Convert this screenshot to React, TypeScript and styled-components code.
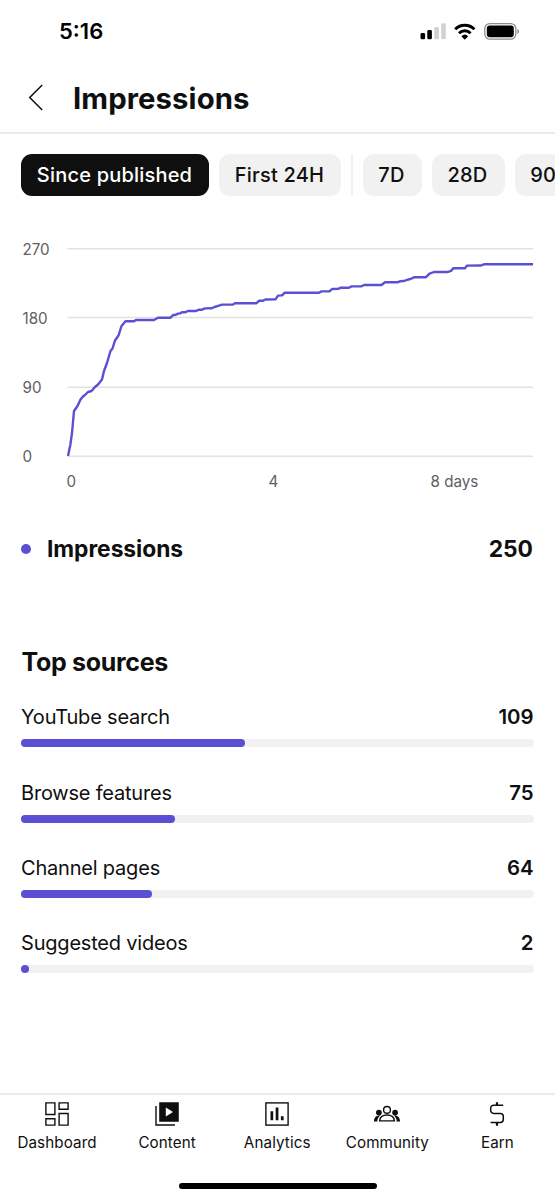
import React from 'react';
import styled, { createGlobalStyle } from 'styled-components';

const ink = '#0f0f0f';
const accent = '#5b50d3';

const GlobalStyle = createGlobalStyle`
  *, *::before, *::after { box-sizing: border-box; }
  body { margin: 0; background: #fff; }
`;

const Screen = styled.div`
  width: 555px;
  height: 1200px;
  display: flex;
  flex-direction: column;
  overflow: hidden;
  background: #fff;
  color: ${ink};
  font-family: Inter, "Liberation Sans", sans-serif;
`;

const StatusBar = styled.div`
  height: 64px;
  flex: none;
  display: flex;
  justify-content: space-between;
  align-items: center;
  padding: 0 35px 0 59px;
`;

const Clock = styled.div`
  font-size: 22px;
  font-weight: 600;
  padding-bottom: 2px;
  color: #000;
`;

const Header = styled.header`
  height: 70px;
  flex: none;
  display: flex;
  align-items: center;
  gap: 29px;
  padding: 0 0 0 28px;
  border-bottom: 2px solid #ebebeb;
`;

const Title = styled.h1`
  margin: 0;
  padding-top: 2px;
  font-size: 29.3px;
  font-weight: 700;
  letter-spacing: 0.1px;
  line-height: 36px;
`;

const Chips = styled.div`
  display: flex;
  flex: none;
  gap: 10px;
  height: 42px;
  margin-top: 20px;
  padding-left: 21px;
  overflow: hidden;
`;

const Chip = styled.button<{ $width: number; $active?: boolean }>`
  flex: none;
  width: ${p => p.$width}px;
  height: 42px;
  padding: 0 1px 1px 0;
  border: 0;
  border-radius: 11px;
  background: ${p => (p.$active ? ink : '#f1f1f1')};
  color: ${p => (p.$active ? '#fff' : ink)};
  font-family: inherit;
  font-size: 20px;
  font-weight: 500;
  letter-spacing: 0.2px;
  white-space: nowrap;
`;

const ChipDivider = styled.div`
  flex: none;
  width: 1.5px;
  background: #f1f1f1;
`;

const Chart = styled.svg`
  display: block;
  flex: none;
  margin-top: 34px;
  font-size: 15.2px;
  fill: #606060;
`;

const Legend = styled.div`
  height: 36px;
  flex: none;
  display: flex;
  align-items: center;
  margin: 31px 22px 0 21px;
`;

const Dot = styled.span`
  width: 10px;
  height: 10px;
  margin-right: 16px;
  border-radius: 50%;
  background: ${accent};
`;

const LegendLabel = styled.span`
  flex: 1;
  padding-bottom: 1px;
  font-size: 22.8px;
  font-weight: 700;
  letter-spacing: -0.05px;
`;

const LegendValue = styled.span`
  padding-bottom: 1px;
  font-size: 22.8px;
  font-weight: 700;
`;

const SectionTitle = styled.h2`
  margin: 79px 0 23.4px 21.5px;
  font-size: 25px;
  line-height: 32px;
  font-weight: 700;
  letter-spacing: -0.3px;
`;

const Sources = styled.div`
  display: flex;
  flex: none;
  flex-direction: column;
  padding: 0 21px;
`;

const Source = styled.div`
  height: 75.2px;
`;

const SourceText = styled.div`
  display: flex;
  justify-content: space-between;
  font-size: 20px;
  line-height: 32px;
  margin-bottom: 6px;
`;

const SourceName = styled.span`
  letter-spacing: -0.2px;
`;

const SourceValue = styled.span`
  padding-right: 0.5px;
  font-size: 20.4px;
  font-weight: 600;
`;

const Track = styled.div`
  height: 8px;
  border-radius: 4px;
  background: #f1f1f1;
`;

const Fill = styled.div`
  height: 8px;
  min-width: 8px;
  border-radius: 4px;
  background: ${accent};
`;

const TabBar = styled.nav`
  height: 107px;
  flex: none;
  display: flex;
  margin-top: auto;
  padding: 6px 2.5px 0 2px;
  border-top: 2px solid #ebebeb;
  position: relative;
`;

const Tab = styled.div`
  flex: 1;
  display: flex;
  flex-direction: column;
  align-items: center;
  gap: 5px;
  font-size: 15.2px;
  line-height: 22px;
  letter-spacing: 0.1px;
`;

const HomeIndicator = styled.div`
  position: absolute;
  left: 179px;
  bottom: 11px;
  width: 198px;
  height: 6.5px;
  border-radius: 4px;
  background: #000;
`;

const gridLines = [
  { y: 248.7, label: '270' },
  { y: 317.6, label: '180' },
  { y: 387.3, label: '90' },
  { y: 456.2, label: '0' },
];

const series =
  '68,456 70.3,445 72,433 74,411 77.5,406 80.5,399.5 83,396.5 85,395 88,392 91.5,391 95,387 98,384.5 102,379.5 104,371 107,363 110.5,351 112.5,348.5 115,340.5 118.5,335.5 121.5,326 125.5,321.3 134,321.3 136,320 154,320 158,317.7 170.5,317.7 173,315.2 175.5,314.8 178,313.6 180,313.4 182,312.3 185.5,312.2 188,311 196,311 198.5,309.8 202,309.7 205,308.4 211.5,308.3 214.5,307 219,305.6 222,304.6 233,304.5 235,303.3 256.5,303.2 259,300.8 263,300.7 265.5,299.5 275.5,299.4 278,295.6 282,295.4 284.5,292.8 319,292.8 321.5,291.4 329.5,291.4 332,289 338,288.9 340.5,287.8 349,287.7 351.5,286.4 361.5,286.3 364,285 381.5,285 385,282.3 398,282.2 400.5,281.2 404,281 407,279.8 410.5,279 414,277.3 426,277.2 429.5,273.7 434,272 448,272 451,270.8 453.5,268.2 465,268.2 467,265.6 481,265.5 484,264.3 533,264.3';

const sources = [
  { name: 'YouTube search', value: 109 },
  { name: 'Browse features', value: 75 },
  { name: 'Channel pages', value: 64 },
  { name: 'Suggested videos', value: 2 },
];
const total = 250;

const StatusIcons = () => (
  <svg width="100" height="20" viewBox="0 0 100 20">
    <rect x="0.5" y="11" width="4.6" height="6.3" rx="1.4" />
    <rect x="7.3" y="8" width="4.6" height="9.3" rx="1.4" />
    <rect x="14.3" y="5" width="4.6" height="12.3" rx="1.4" fill="#d2d2d2" />
    <rect x="21.2" y="1.3" width="4.6" height="16" rx="1.4" fill="#d2d2d2" />
    <g fill="none" stroke="#000" strokeWidth="3">
      <path d="M35.2 7.2a13.6 13.6 0 0 1 19.2 0" />
      <path d="M39 11.2a8.3 8.3 0 0 1 11.6 0" />
    </g>
    <path d="M41.4 14.2a5 5 0 0 1 6.8 0l-3.4 3.6z" />
    <rect x="64.8" y="1.6" width="31" height="15.6" rx="5" fill="none" stroke="#8c8c8c" strokeWidth="1.3" />
    <rect x="66.8" y="3.5" width="27" height="11.8" rx="3" />
    <path d="M97.4 7v5c2.2-.8 2.2-4.2 0-5z" fill="#8c8c8c" />
  </svg>
);

const DashboardIcon = () => (
  <svg width="26" height="26" viewBox="0 0 26 26" fill="none" stroke={ink} strokeWidth="1.4">
    <path d="M1.9 1.9h9v11.6h-9zM15.1 1.9h9v6.3h-9zM1.9 17.8h9v6.3h-9zM15.1 12.5h9v11.6h-9z" />
  </svg>
);

const ContentIcon = () => (
  <svg width="26" height="26" viewBox="0 0 26 26">
    <path d="M5.2 1.2h19.6v19.6H5.2zM11.8 6.5v9l7.2-4.5z" fill={ink} fillRule="evenodd" />
    <path d="M2 5v19h19" fill="none" stroke={ink} strokeWidth="1.4" />
  </svg>
);

const AnalyticsIcon = () => (
  <svg width="26" height="26" viewBox="0 0 26 26">
    <rect x="1.9" y="1.9" width="22.2" height="22.2" fill="none" stroke={ink} strokeWidth="1.4" />
    <path d="M6.5 10.2h2.7v9H6.5zM11.7 6.5h2.7v12.7h-2.7zM16.9 15.3h2.7v3.9h-2.7z" fill={ink} />
  </svg>
);

const CommunityIcon = () => (
  <svg width="28" height="26" viewBox="0 0 28 26" fill={ink}>
    <circle cx="5.9" cy="11.6" r="2.9" />
    <circle cx="22.1" cy="11.6" r="2.9" />
    <path d="M1 20.6c0-3.600 1.400-6.300 6.300-6.100-2.100 1.600-2.900 3.500-3 6.100zM27 20.600c0-3.600-1.400-6.300-6.300-6.100 2.100 1.600 2.900 3.500 3 6.100z" />
    <g fill="none" stroke={ink} strokeWidth="1.4">
      <circle cx="14" cy="8.9" r="3.4" />
      <path d="M6.600 19.9c.3-4 3-5.900 7.400-5.900s7.100 1.900 7.400 5.900z" />
    </g>
  </svg>
);

const EarnIcon = () => (
  <svg width="26" height="26" viewBox="0 0 26 26" fill="none" stroke={ink}>
    <path d="M19.2 4.2H9.6a2.9 2.9 0 0 0-2.9 2.9v2.4a2.9 2.9 0 0 0 2.9 2.9h6.8a2.9 2.9 0 0 1 2.9 2.9v3.2a2.9 2.9 0 0 1-2.9 2.9H6.6" strokeWidth="1.5" />
    <path d="M13 1.2v3M13 21.5v3.3" strokeWidth="2.2" />
  </svg>
);

const tabs = [
  { name: 'Dashboard', Icon: DashboardIcon },
  { name: 'Content', Icon: ContentIcon },
  { name: 'Analytics', Icon: AnalyticsIcon },
  { name: 'Community', Icon: CommunityIcon },
  { name: 'Earn', Icon: EarnIcon },
];

export default function App() {
  return (
    <Screen>
      <GlobalStyle />
      <StatusBar>
        <Clock>5:16</Clock>
        <StatusIcons />
      </StatusBar>
      <Header>
        <svg width="16" height="28" viewBox="0 0 16 28" fill="none" stroke={ink} strokeWidth="1.5">
          <path d="M14.2 1 1.7 13.5l12.5 12.5" />
        </svg>
        <Title>Impressions</Title>
      </Header>
      <Chips>
        <Chip $width={188} $active>Since published</Chip>
        <Chip $width={122}>First 24H</Chip>
        <ChipDivider />
        <Chip $width={59}>7D</Chip>
        <Chip $width={73}>28D</Chip>
        <Chip $width={73}>90D</Chip>
      </Chips>
      <Chart width="555" height="270" viewBox="0 230 555 270">
        {gridLines.map(g => (
          <React.Fragment key={g.label}>
            <path d={`M67.5 ${g.y}H533`} stroke="#e2e2e2" strokeWidth="1.5" />
            <text x="22.5" y={g.y + 5.9}>{g.label}</text>
          </React.Fragment>
        ))}
        <polyline points={series} fill="none" stroke={accent} strokeWidth="2.4" strokeLinejoin="round" />
        <text x="66.5" y="486.8">0</text>
        <text x="268.5" y="486.8">4</text>
        <text x="430.5" y="486.8">8 days</text>
      </Chart>
      <Legend>
        <Dot />
        <LegendLabel>Impressions</LegendLabel>
        <LegendValue>{total}</LegendValue>
      </Legend>
      <SectionTitle>Top sources</SectionTitle>
      <Sources>
        {sources.map(s => (
          <Source key={s.name}>
            <SourceText>
              <SourceName>{s.name}</SourceName>
              <SourceValue>{s.value}</SourceValue>
            </SourceText>
            <Track>
              <Fill style={{ width: `${(s.value / total) * 100}%` }} />
            </Track>
          </Source>
        ))}
      </Sources>
      <TabBar>
        {tabs.map(({ name, Icon }) => (
          <Tab key={name}>
            <Icon />
            {name}
          </Tab>
        ))}
        <HomeIndicator />
      </TabBar>
    </Screen>
  );
}
